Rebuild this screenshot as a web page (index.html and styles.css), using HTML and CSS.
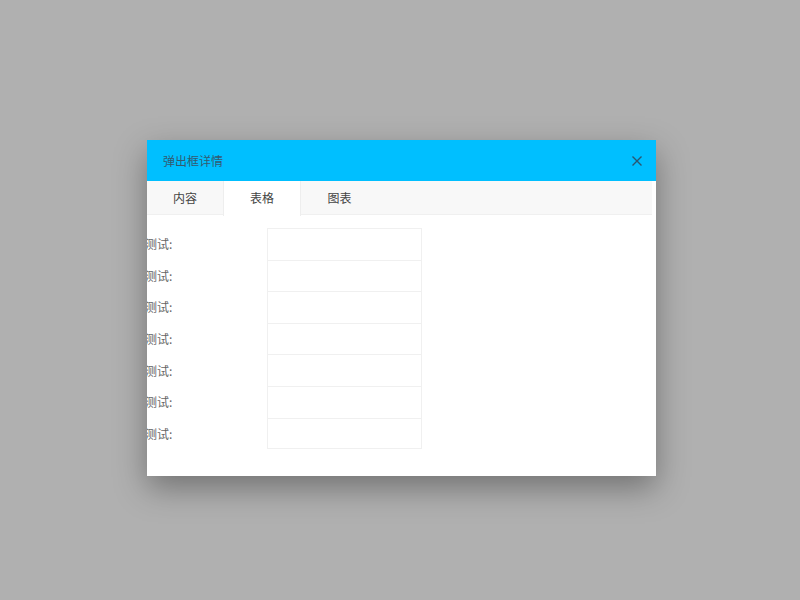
FILE: index.html
```html
<!DOCTYPE html>
<html lang="zh">
<head>
<meta charset="utf-8">
<link rel="stylesheet" href="styles.css">
</head>
<body>
<div class="dialog">
  <div class="header">
    <span class="title">弹出框详情</span>
    <svg class="close" width="12" height="12" viewBox="0 0 12 12"><path d="M1.5 1.5 L10.5 10.5 M10.5 1.5 L1.5 10.5" stroke="#2b5670" stroke-width="1.4" fill="none"/></svg>
  </div>
  <div class="tabs">
    <div class="tab">内容</div>
    <div class="tab active">表格</div>
    <div class="tab">图表</div>
  </div>
  <div class="content">
    <div class="row"><span class="label">测试:</span><span class="cell"></span></div>
    <div class="row"><span class="label">测试:</span><span class="cell"></span></div>
    <div class="row"><span class="label">测试:</span><span class="cell"></span></div>
    <div class="row"><span class="label">测试:</span><span class="cell"></span></div>
    <div class="row"><span class="label">测试:</span><span class="cell"></span></div>
    <div class="row"><span class="label">测试:</span><span class="cell"></span></div>
    <div class="row"><span class="label">测试:</span><span class="cell"></span></div>
  </div>
</div>
</body>
</html>
```
FILE: styles.css
```css
html, body {
  margin: 0;
  padding: 0;
}
body {
  background: #b0b0b0;
  width: 800px;
  height: 600px;
  overflow: hidden;
  font-family: "Microsoft YaHei", "Noto Sans CJK SC", "Liberation Sans", sans-serif;
  font-size: 12px;
  padding-top: 140px;
  padding-left: 147px;
  box-sizing: border-box;
}
.dialog {
  width: 509px;
  height: 336px;
  background: #fff;
  box-shadow: 0 12px 30px rgba(0, 0, 0, 0.35);
  overflow: hidden;
  display: flex;
  flex-direction: column;
}
.header {
  height: 41px;
  background: #00bfff;
  display: flex;
  align-items: center;
  padding: 0 13px 0 16px;
  flex-shrink: 0;
}
.title {
  color: #335a70;
  font-size: 12px;
  flex: 1;
}
.close {
  display: block;
}
.tabs {
  height: 34px;
  background: #f8f8f8;
  border-bottom: 1px solid #f0f0f0;
  margin-right: 4px;
  display: flex;
  flex-shrink: 0;
  box-sizing: border-box;
}
.tab {
  width: 77px;
  text-align: center;
  line-height: 34px;
  color: #444;
  font-size: 12px;
}
.tab:first-child {
  width: 76px;
}
.tab.active {
  background: #fff;
  width: 78px;
  border-left: 1px solid #eee;
  border-right: 1px solid #eee;
  height: 35px;
  box-sizing: border-box;
}
.content {
  padding-top: 13px;
  margin-left: -2px;
}
.row {
  display: flex;
  height: 31.6px;
  align-items: center;
}
.label {
  width: 122px;
  color: #666;
  font-size: 12px;
}
.cell {
  width: 155px;
  height: 31.6px;
  border: 1px solid #f0f0f0;
  border-bottom: none;
  box-sizing: border-box;
}
.row:last-child .cell {
  border-bottom: 1px solid #f0f0f0;
}
```
